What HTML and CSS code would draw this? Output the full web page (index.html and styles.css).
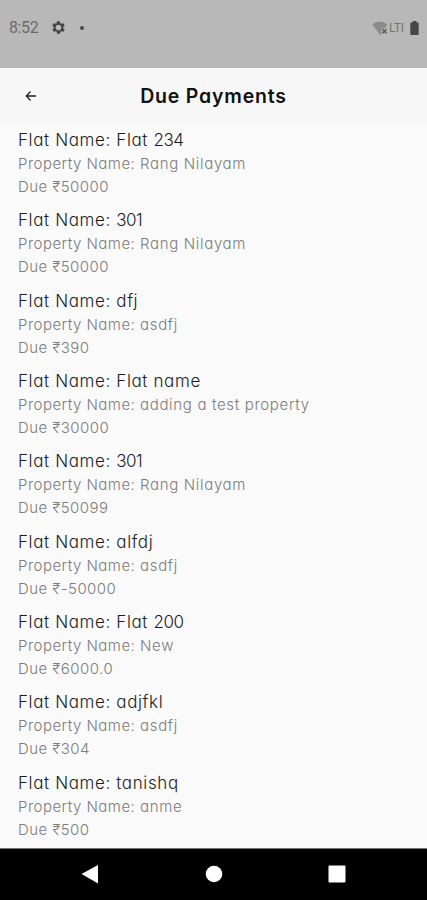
FILE: index.html
```html
<!DOCTYPE html>
<html lang="en">
<head>
<meta charset="utf-8">
<title>Due Payments</title>
<link rel="stylesheet" href="styles.css">
</head>
<body>
<div class="status">
  <span class="time">8:52</span>
  <svg class="gear" viewBox="0 0 24 24"><path fill-rule="evenodd" d="M19.4 13c0-.3.1-.6.1-1s0-.7-.1-1l2.1-1.6c.2-.2.2-.4.1-.6l-2-3.5c-.1-.2-.4-.3-.6-.2l-2.5 1c-.5-.4-1.100-.7-1.700-1l-.4-2.600c0-.3-.2-.5-.5-.5h-4c-.2 0-.4.2-.5.4l-.4 2.700c-.6.2-1.100.6-1.700 1l-2.500-1c-.2-.1-.5 0-.6.2l-2 3.500c-.1.200 0 .500.100.600L4.600 11c0 .3-.1.700-.1 1s0 .7.100 1l-2.100 1.600c-.2.200-.2.400-.1.600l2 3.500c.1.200.4.300.6.200l2.500-1c.5.400 1.100.7 1.700 1l.4 2.600c.1.300.3.500.5.500h4c.3 0 .5-.2.500-.4l.4-2.700c.6-.2 1.200-.6 1.700-1l2.500 1c.2.100.5 0 .6-.2l2-3.500c.1-.2.1-.5-.1-.6zM12 16.500a4.500 4.500 0 1 1 0-9a4.500 4.500 0 0 1 0 9z"/></svg>
  <i class="dot"></i>
  <svg class="wifi" viewBox="0 0 16 16"><path fill="#8c8c8c" d="M.3 4.200Q8-1 15.400 4.200L13 8.500H9.500V14L8 15z"/><path fill="#555" d="M10 9.700l1-1 1.500 1.500L14 8.700l1 1-1.500 1.500L15 12.700l-1 1-1.500-1.500L11 13.700l-1-1 1.500-1.500z"/></svg>
  <span class="lte">LTI</span>
  <svg class="battery" viewBox="0 0 9 15"><path d="M2.500 1.500V0h4v1.500H8q1 0 1 1V14q0 1-1 1H1q-1 0-1-1V2.500q0-1 1-1z"/></svg>
</div>
<header class="bar">
  <svg class="back" viewBox="0 0 12 12"><path d="M5.500 1.500L1.300 6l4.200 4.500M1.300 6H11"/></svg>
  <h1>Due Payments</h1>
</header>
<main class="list">
  <section class="item"><h2>Flat Name: Flat <span class="num">234</span></h2><p>Property Name: <span class="value">Rang Nilayam</span></p><p>Due ₹50000</p></section>
  <section class="item"><h2>Flat Name: <span class="num">301</span></h2><p>Property Name: <span class="value">Rang Nilayam</span></p><p>Due ₹50000</p></section>
  <section class="item"><h2>Flat Name: dfj</h2><p>Property Name: <span class="value">asdfj</span></p><p>Due ₹390</p></section>
  <section class="item"><h2>Flat Name: Flat name</h2><p>Property Name: <span class="value">adding a test property</span></p><p>Due ₹30000</p></section>
  <section class="item"><h2>Flat Name: <span class="num">301</span></h2><p>Property Name: <span class="value">Rang Nilayam</span></p><p>Due ₹50099</p></section>
  <section class="item"><h2>Flat Name: alfdj</h2><p>Property Name: <span class="value">asdfj</span></p><p>Due ₹-50000</p></section>
  <section class="item"><h2>Flat Name: Flat <span class="num">200</span></h2><p>Property Name: <span class="value">New</span></p><p>Due ₹6000.0</p></section>
  <section class="item"><h2>Flat Name: adjfkl</h2><p>Property Name: <span class="value">asdfj</span></p><p>Due ₹304</p></section>
  <section class="item"><h2>Flat Name: tanishq</h2><p>Property Name: <span class="value">anme</span></p><p>Due ₹500</p></section>
</main>
<nav class="nav">
  <svg viewBox="0 0 20 20"><path d="M1.500 10L18 1v18.500z"/></svg>
  <svg viewBox="0 0 20 20"><circle cx="10" cy="10" r="8.300"/></svg>
  <svg viewBox="0 0 20 20"><rect x="1.500" y="1.500" width="17" height="17" rx="1"/></svg>
</nav>
</body>
</html>
```
FILE: styles.css
```css
* { box-sizing: border-box; margin: 0; padding: 0; }
body {
  width: 427px; height: 900px; overflow: hidden;
  display: flex; flex-direction: column;
  background: #fafafa;
  font-family: Inter, "Noto Sans", sans-serif;
  font-feature-settings: "cv11" 1, "calt" 0;
}
svg { display: block; flex: none; }
.status {
  height: 68px; flex: none; background: #b8b8b8;
  display: flex; align-items: center;
  padding: 0 8px 13px 9px;
  font-family: Roboto, sans-serif; color: #6c6c6c;
}
.time { width: 42px; font-size: 16px; letter-spacing: -.4px; }
.gear { width: 15px; height: 15px; fill: #444; }
.dot { width: 4px; height: 4px; margin-left: 14px; border-radius: 50%; background: #484848; }
.wifi { width: 16px; height: 16px; margin-left: auto; }
.lte { width: 16px; margin: 0 5px 0 1px; font-size: 12px; letter-spacing: -.1px; color: #747474; }
.battery { width: 9px; height: 14px; fill: #484848; }
.bar {
  height: 56px; flex: none; background: #f7f7f7;
  display: grid; grid-template-columns: 60px 1fr 60px; align-items: center;
}
.back { width: 12px; height: 12px; margin-left: 25px; fill: none; stroke: #222; stroke-width: 1.3; }
.bar h1 { text-align: center; font-size: 19.5px; line-height: 28px; font-weight: 600; letter-spacing: .8px; color: #111; }
.list { flex: 1; min-height: 0; padding: 5px 18px 0; }
.item { height: 80.35px; }
.item h2 { font-size: 17px; line-height: 23px; font-weight: 300; letter-spacing: .62px; color: #1c1c1c; white-space: nowrap; }
.item p { font-size: 15px; line-height: 23px; font-weight: 300; letter-spacing: .48px; color: #7c7c7c; white-space: nowrap; }
.num { letter-spacing: -.5px; }
.value { letter-spacing: .67px; }
.nav {
  height: 52px; flex: none; background: #000; border-top: 1px solid #777;
  display: flex; justify-content: space-between; padding: 15px 80px;
}
.nav svg { width: 20px; height: 20px; fill: #fff; }
```
